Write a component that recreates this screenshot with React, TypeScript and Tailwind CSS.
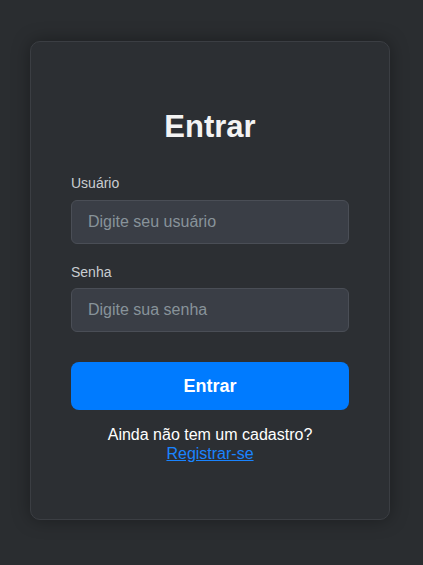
const Field = ({
  label,
  placeholder,
  type = "text",
  className = "",
  gap = "mt-[9px]",
}: {
  label: string;
  placeholder: string;
  type?: string;
  className?: string;
  gap?: string;
}) => (
  <div className={className}>
    <label className="block text-[14px] leading-[16px] text-[#c9cdd1]">{label}</label>
    <input
      type={type}
      placeholder={placeholder}
      className={`${gap} block h-[44px] w-full rounded-[6px] border border-[#4a4e56] bg-[#3a3e46] px-4 text-[16px] text-white outline-none placeholder:text-[#88939a]`}
    />
  </div>
);

const App = () => {
  return (
    <div
      className="flex min-h-screen justify-center bg-[#2a2d30] pr-[3px] pt-[41px]"
      style={{ fontFamily: '"Liberation Sans", Arial, sans-serif' }}
    >
      <div className="h-fit w-[360px] rounded-[10px] border border-[#3b3e43] bg-[#2c2f33] px-10 pb-[56px] pt-[67px] shadow-[0_0_18px_rgba(0,0,0,0.35)]">
        <h1 className="text-center text-[31px] font-bold leading-[36px] text-[#f3f3f3]">Entrar</h1>
        <Field className="mt-[30px]" label="Usuário" placeholder="Digite seu usuário" />
        <Field
          className="mt-[20px]"
          gap="mt-[8px]"
          type="password"
          label="Senha"
          placeholder="Digite sua senha"
        />
        <button className="mt-[30px] h-[48px] w-full rounded-[8px] bg-[#007bff] text-[18px] font-bold text-white">
          Entrar
        </button>
        <p className="mt-[15px] text-center text-[16px] leading-[19px] text-white">
          Ainda não tem um cadastro?
          <br />
          <a href="#" className="text-[#1a84ff] underline">
            Registrar-se
          </a>
        </p>
      </div>
    </div>
  );
};

export default App;
